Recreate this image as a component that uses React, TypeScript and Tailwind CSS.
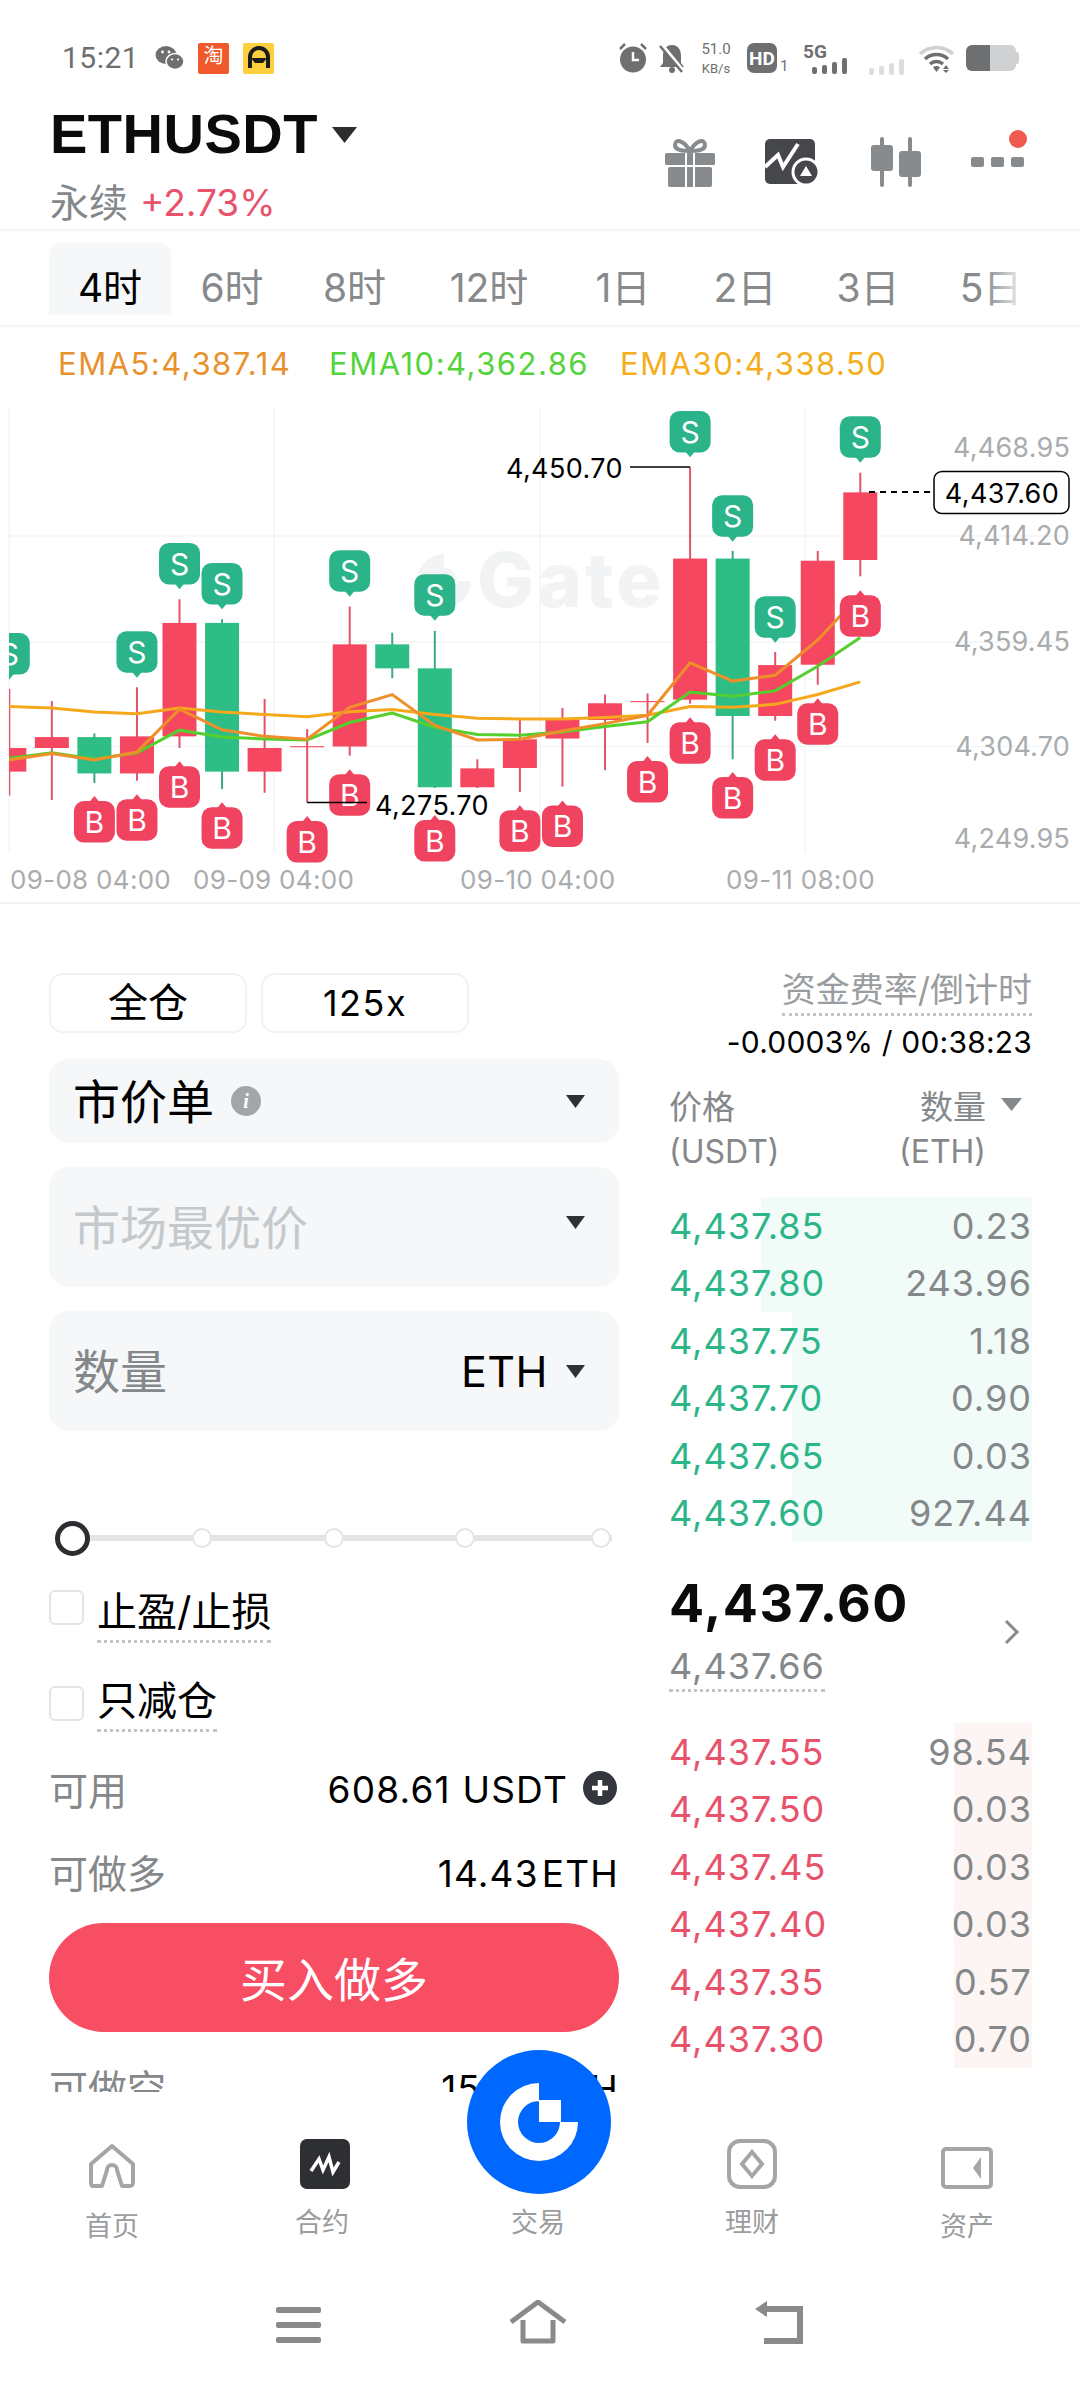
import React from "react";

const CJK = "font-['Inter','Noto_Sans_CJK_SC',sans-serif]";
const X = (i: number) => 9.3 + 42.55 * i;
const Y = (z: number) => 340 + z / 2.75 - 396;

const RED = "#f5475f";
const GREEN = "#2ebd85";
const WICKR = "#e4526a";
const WICKG = "#3aa884";

type C = [string, number, number, number, number];
const candles: C[] = [
  ["r", 1122, 1187, 960, 1253], ["r", 1092, 1122, 993, 1265], ["g", 1092, 1192, 1082, 1218],
  ["r", 1090, 1192, 955, 1212], ["r", 778, 1090, 713, 1122], ["g", 778, 1187, 768, 1235],
  ["r", 1122, 1187, 987, 1245], ["r", 1117, 1120, 1070, 1272], ["r", 837, 1118, 733, 1143],
  ["g", 837, 903, 805, 930], ["g", 903, 1230, 800, 1232], ["r", 1178, 1230, 1153, 1232],
  ["r", 1098, 1177, 1043, 1243], ["r", 1045, 1096, 1012, 1228], ["r", 999, 1045, 975, 1183],
  ["r", 993, 996, 972, 1108], ["r", 601, 989, 350, 1000], ["g", 601, 1034, 580, 1153],
  ["r", 894, 1034, 858, 1047], ["r", 607, 893, 580, 948], ["r", 419, 605, 365, 650],
];
const ema30 = [1008, 1012, 1023, 1028, 1012, 1023, 1030, 1036, 1022, 1016, 1030, 1040, 1042, 1042, 1038, 1032, 1008, 1010, 1002, 975, 940];
const ema10 = [1150, 1135, 1152, 1135, 1073, 1092, 1097, 1100, 1052, 1026, 1065, 1085, 1087, 1078, 1063, 1050, 968, 980, 965, 897, 818];
const ema5 = [1155, 1137, 1155, 1133, 1015, 1072, 1090, 1098, 1010, 975, 1060, 1100, 1098, 1075, 1055, 1032, 888, 938, 922, 825, 700];
const sells: [number, number][] = [[0, 806], [3, 801], [4, 558], [5, 613], [8, 578], [10, 644], [16, 195], [17, 427], [18, 705], [20, 210]];
const buys: [number, number][] = [[2, 1268], [3, 1263], [4, 1172], [5, 1285], [7, 1323], [8, 1194], [10, 1320], [12, 1293], [13, 1280], [15, 1158], [16, 1051], [17, 1202], [18, 1098], [19, 999], [20, 702]];
const poly = (a: number[]) => a.map((v, i) => `${X(i)},${Y(v)}`).join(" ");

function Chart() {
  const font = "Inter, sans-serif";
  const axis = [["4,468.95", 447], ["4,414.20", 535], ["4,359.45", 641], ["4,304.70", 746], ["4,249.95", 838]] as const;
  const times = [["09-08 04:00", 10], ["09-09 04:00", 193], ["09-10 04:00", 460], ["09-11 08:00", 726]] as const;
  return (
    <svg width="1080" height="509" viewBox="0 0 1080 509" className="block">
      <defs>
        <clipPath id="plot"><rect x="9" y="0" width="1071" height="509" /></clipPath>
      </defs>
      {[536, 642, 746.5].map((y) => <line key={y} x1="9" x2="1068" y1={y - 396} y2={y - 396} stroke="#f4f5f5" strokeWidth="1.5" />)}
      {[9, 274, 540, 805].map((x) => <line key={x} x1={x} x2={x} y1="11" y2="457" stroke="#f4f5f5" strokeWidth="1.5" />)}
      <line x1="0" x2="1080" y1="507" y2="507" stroke="#f3f4f4" strokeWidth="2" />
      <g fill="#f2f3f4">
        <path fillRule="evenodd" d="M444 158 A27 27 0 1 0 471 185 H444 Z M444 172 A13 13 0 1 1 431 185 H444 Z" />
        <text x="477" y="211" fontFamily={font} fontWeight="800" fontSize="76" letterSpacing="3">Gate</text>
      </g>
      <g clipPath="url(#plot)">
        {candles.map(([c, top, bottom, wt, wb], i) => (
          <g key={i}>
            <line x1={X(i)} x2={X(i)} y1={Y(wt)} y2={Y(wb)} stroke={c === "r" ? WICKR : WICKG} strokeWidth="2" />
            <rect x={X(i) - 17} width="34" y={Y(top)} height={Y(bottom) - Y(top)} fill={c === "r" ? RED : GREEN} />
          </g>
        ))}
        <polyline points={poly(ema30)} fill="none" stroke="#f5a81c" strokeWidth="3" />
        <polyline points={poly(ema10)} fill="none" stroke="#55cf2e" strokeWidth="3" />
        <polyline points={poly(ema5)} fill="none" stroke="#ee8f2a" strokeWidth="3" />
        <line x1="630" x2={X(16)} y1="71" y2="71" stroke="#000" strokeWidth="1.5" />
        {sells.map(([i, t]) => (
          <g key={`s${i}`}>
            <path d={`M${X(i) - 5} ${Y(t + 114) - 1} L${X(i)} ${Y(t + 114) + 5} L${X(i) + 5} ${Y(t + 114) - 1} Z`} fill="#2bb389" />
            <rect x={X(i) - 20.5} y={Y(t)} width="41" height="41.5" rx="10" fill="#2bb389" />
            <text x={X(i)} y={Y(t) + 21} textAnchor="middle" dominantBaseline="central" fill="#fff" fontFamily={font} fontSize="30">S</text>
          </g>
        ))}
        {buys.map(([i, t]) => (
          <g key={`b${i}`}>
            <path d={`M${X(i) - 5} ${Y(t) + 1} L${X(i)} ${Y(t) - 5} L${X(i) + 5} ${Y(t) + 1} Z`} fill="#ef4360" />
            <rect x={X(i) - 20.5} y={Y(t)} width="41" height="41.5" rx="10" fill="#ef4360" />
            <text x={X(i)} y={Y(t) + 21} textAnchor="middle" dominantBaseline="central" fill="#fff" fontFamily={font} fontSize="30">B</text>
          </g>
        ))}
        <line x1={X(7)} x2="367" y1="406.5" y2="406.5" stroke="#000" strokeWidth="1.5" />
      </g>
      {axis.map(([t, y]) => (
        <text key={t} x="1070" y={y - 396} textAnchor="end" dominantBaseline="central" fill="#a9acae" fontFamily={font} fontSize="27" letterSpacing="0.2">{t}</text>
      ))}
      {times.map(([t, x]) => (
        <text key={t} x={x} y="483" dominantBaseline="central" fill="#a9acae" fontFamily={font} fontSize="26" letterSpacing="0.3">{t}</text>
      ))}
      <text x="375" y="409" dominantBaseline="central" fill="#000" fontFamily={font} fontSize="27" letterSpacing="0.4">4,275.70</text>
      <text x="623" y="72" textAnchor="end" dominantBaseline="central" fill="#000" fontFamily={font} fontSize="27" letterSpacing="0.4">4,450.70</text>
      <line x1="869" x2="934" y1="96" y2="96" stroke="#000" strokeWidth="2" strokeDasharray="6 5" />
      <rect x="934" y="75.5" width="135" height="42" rx="8" fill="#fff" stroke="#000" strokeWidth="1.5" />
      <text x="1002" y="97" textAnchor="middle" dominantBaseline="central" fill="#000" fontFamily={font} fontSize="27" letterSpacing="0.4">4,437.60</text>
    </svg>
  );
}

function Tri({ className = "" }: { className?: string }) {
  return (
    <svg width="19" height="13" viewBox="0 0 19 13" className={className}>
      <path d="M0 0H19L9.5 13Z" fill="#2f3133" />
    </svg>
  );
}

function StatusBar() {
  return (
    <div className="h-[96px] flex items-start justify-between pl-[62px] pr-[60px] pt-[41px] text-[#6d6f71]">
      <div className="flex items-center h-[34px]">
        <span className="font-['Roboto',sans-serif] text-[30px] leading-none tracking-[0.5px] w-[93px]">15:21</span>
        <svg width="30" height="26" viewBox="0 0 30 26">
          <ellipse cx="11" cy="10" rx="10.5" ry="9" fill="#6d6f71" />
          <ellipse cx="20" cy="16.5" rx="9" ry="8" fill="#6d6f71" stroke="#fff" strokeWidth="1.5" />
          <circle cx="7.5" cy="7" r="1.4" fill="#fff" /><circle cx="14" cy="7" r="1.4" fill="#fff" />
          <circle cx="17" cy="14.5" r="1.1" fill="#fff" /><circle cx="23" cy="14.5" r="1.1" fill="#fff" />
        </svg>
        <div className="w-[31px] h-[31px] ml-[13px] bg-[#f0592b] flex items-start justify-center pt-[2px] font-['Noto_Sans_CJK_SC',sans-serif] text-white text-[20px] leading-none rounded-[2px]">淘</div>
        <div className="w-[31px] h-[31px] ml-[14px] bg-[#fbd03c] flex items-center justify-center rounded-[2px]">
          <svg width="22" height="24" viewBox="0 0 22 24">
            <path d="M2 22 L2 11 A9 9 0 0 1 20 11 L20 22" fill="none" stroke="#1c1c1c" strokeWidth="4" />
            <path d="M3 12 H19 L15 17 H7 Z" fill="#1c1c1c" />
          </svg>
        </div>
      </div>
      <div className="flex items-center h-[34px]">
        <svg width="28" height="30" viewBox="0 0 28 30">
          <circle cx="14" cy="16.5" r="13" fill="#6d6f71" />
          <path d="M1 6 L6 1 M27 6 L22 1" stroke="#6d6f71" strokeWidth="2.5" />
          <path d="M14 9V17H20" stroke="#fff" strokeWidth="2.5" fill="none" />
        </svg>
        <svg width="30" height="30" viewBox="0 0 30 30" className="ml-[10px]">
          <path d="M15 2 C8 2 6 8 6 13 V20 L3 24 H27 L24 20 V13 C24 8 22 2 15 2Z" fill="#6d6f71" />
          <circle cx="15" cy="27" r="3" fill="#6d6f71" />
          <path d="M4 1 L26 28" stroke="#fff" strokeWidth="4" /><path d="M3 3 L25 29" stroke="#6d6f71" strokeWidth="2.5" />
        </svg>
        <div className="ml-[13px] w-[32px] flex flex-col items-center font-['Roboto',sans-serif] leading-none">
          <span className="text-[15px] h-[20px]">51.0</span>
          <span className="text-[13px]">KB/s</span>
        </div>
        <div className="ml-[15px] w-[30px] h-[30px] rounded-[7px] bg-[#6d6f71] text-white text-[19px] font-bold font-['Roboto',sans-serif] flex items-center justify-center leading-none">HD</div>
        <span className="w-[10px] self-end mb-[1px] ml-[3px] text-[15px] font-['Roboto',sans-serif] leading-none">1</span>
        <div className="ml-[13px] w-[45px] h-[32px] relative">
          <span className="absolute left-0 top-0 text-[19px] font-bold font-['Roboto',sans-serif] leading-none">5G</span>
          <svg width="36" height="16" viewBox="0 0 36 16" className="absolute right-0 bottom-0">
            <rect x="0" y="9" width="5" height="7" rx="2" fill="#6d6f71" /><rect x="10" y="7" width="5" height="9" rx="2" fill="#6d6f71" />
            <rect x="20" y="4" width="5" height="12" rx="2" fill="#6d6f71" /><rect x="30" y="0" width="5" height="16" rx="2" fill="#6d6f71" />
          </svg>
        </div>
        <svg width="37" height="16" viewBox="0 0 37 16" className="ml-[21px] self-end">
          <rect x="0" y="9" width="5" height="7" rx="2" fill="#dcdddd" /><rect x="10" y="7" width="5" height="9" rx="2" fill="#dcdddd" />
          <rect x="20" y="4" width="5" height="12" rx="2" fill="#dcdddd" /><rect x="30" y="0" width="5" height="16" rx="2" fill="#dcdddd" />
        </svg>
        <svg width="37" height="30" viewBox="0 0 37 30" className="ml-[12px]">
          <path d="M2 11 A24 24 0 0 1 35 11" stroke="#cfd0d1" strokeWidth="3.5" fill="none" />
          <path d="M7 16 A17 17 0 0 1 30 16" stroke="#6d6f71" strokeWidth="3.5" fill="none" />
          <path d="M12 21 A10 10 0 0 1 25 21" stroke="#6d6f71" strokeWidth="3.5" fill="none" />
          <path d="M18.5 29 L15 24.5 A5 5 0 0 1 22 24.5 Z" fill="#6d6f71" />
          <path d="M28 22 L31 26 H25Z M25 27 H31 L28 30Z" fill="#6d6f71" />
        </svg>
        <div className="ml-[11px] w-[54px] h-[26px] flex items-center">
          <div className="w-[24px] h-[26px] bg-[#6d6f71] rounded-l-[6px]" />
          <div className="w-[26px] h-[26px] bg-[#d0d1d2] rounded-r-[6px]" />
          <div className="w-[3px] h-[12px] bg-[#d0d1d2] rounded-r-[2px]" />
        </div>
      </div>
    </div>
  );
}

function Header() {
  return (
    <div className="h-[135px] flex justify-between border-b-2 border-[#f4f5f5]">
      <div className="pl-[50px]">
        <div className="flex items-start h-[64px] pt-[15px]">
          <span className="font-['Liberation_Sans',sans-serif] font-bold text-[56px] leading-[46px] text-[#0b0b0b] tracking-[0.5px]">ETHUSDT</span>
          <svg width="25" height="16" viewBox="0 0 25 16" className="ml-[14px] mt-[16px]"><path d="M0 0H25L12.5 16Z" fill="#2a2c2e" /></svg>
        </div>
        <div className={`flex items-center h-[46px] mt-[19px] ${CJK}`}>
          <span className="text-[39px] leading-none text-[#85888a]">永续</span>
          <span className="ml-[12px] text-[37px] leading-none text-[#e8536b]">+2.73%</span>
        </div>
      </div>
      <div className="relative w-[416px] flex items-start">
        <svg width="50" height="50" viewBox="0 0 50 50" className="ml-[1px] mt-[41px]">
          <path d="M25 14 C18 2 10 2 10 8 C10 14 20 14 25 14 C30 14 40 14 40 8 C40 2 32 2 25 14Z" fill="none" stroke="#888b8d" strokeWidth="4" />
          <rect x="0" y="16" width="50" height="12" rx="1.5" fill="#888b8d" />
          <rect x="3" y="30" width="44" height="20" rx="2" fill="#888b8d" />
          <rect x="20" y="16" width="2" height="34" fill="#fff" /><rect x="28" y="16" width="2" height="34" fill="#fff" />
        </svg>
        <svg width="56" height="46" viewBox="0 0 56 46" className="ml-[50px] mt-[43px]">
          <rect x="0" y="0" width="50" height="45" rx="5" fill="#45474b" />
          <path d="M0 28 L13 16 L18 28 L33 5" fill="none" stroke="#fff" strokeWidth="4" />
          <circle cx="41" cy="33" r="13" fill="#45474b" stroke="#fff" strokeWidth="3" />
          <path d="M41 27 L47 37 H35Z" fill="#fff" />
        </svg>
        <svg width="52" height="50" viewBox="0 0 52 50" className="ml-[49px] mt-[41px]">
          <rect x="10" y="0" width="4" height="50" rx="2" fill="#888b8d" /><rect x="1" y="8" width="22" height="26" rx="3" fill="#888b8d" />
          <rect x="38" y="0" width="4" height="50" rx="2" fill="#888b8d" /><rect x="29" y="14" width="22" height="26" rx="3" fill="#888b8d" />
        </svg>
        <div className="ml-[49px] mt-[61px] flex gap-[7px]">
          <div className="w-[13px] h-[10px] rounded-[2px] bg-[#888b8d]" />
          <div className="w-[13px] h-[10px] rounded-[2px] bg-[#888b8d]" />
          <div className="w-[13px] h-[10px] rounded-[2px] bg-[#888b8d]" />
        </div>
        <div className="absolute left-[345px] top-[34px] w-[18px] h-[18px] rounded-full bg-[#f0594f]" />
      </div>
    </div>
  );
}

function Tabs() {
  const items: [string, string][] = [["6时", "w-[122px]"], ["8时", "w-[123px]"], ["12时", "w-[146px]"], ["1日", "w-[122px]"], ["2日", "w-[122px]"], ["3日", "w-[124px]"], ["5日", "w-[122px]"]];
  return (
    <div className={`relative h-[96px] pl-[49px] pt-[12px] flex items-start border-b-2 border-[#f4f5f5] overflow-hidden ${CJK}`}>
      <div className="w-[122px] h-[72px] rounded-t-[12px] bg-[#f5f7f8] flex items-center justify-center text-[39px] leading-none text-black pt-[16px]">4时</div>
      {items.map(([t, w]) => (
        <div key={t} className={`${w} h-[72px] flex items-center justify-center text-[39px] leading-none text-[#87898b] pt-[16px] shrink-0`}>{t}</div>
      ))}
      <div className="absolute left-[985px] top-0 bottom-0 w-[95px] bg-gradient-to-r from-white/0 via-white via-[45%] to-white" />
    </div>
  );
}

function EmaRow() {
  return (
    <div className="h-[69px] flex items-center pl-[58px] pt-[3px] font-['Inter',sans-serif] text-[31px] leading-none tracking-[1.5px]">
      <span className="w-[271px] text-[#e8912d]">EMA5:4,387.14</span>
      <span className="w-[291px] text-[#52d43a]">EMA10:4,362.86</span>
      <span className="text-[#f5ad1b]">EMA30:4,338.50</span>
    </div>
  );
}

function Dotted({ children, className = "" }: { children: React.ReactNode; className?: string }) {
  return <span className={`inline-block border-b-[3px] border-dotted border-[#c2c4c6] ${className}`}>{children}</span>;
}

function Left() {
  return (
    <div className={`w-[570px] ml-[49px] shrink-0 ${CJK}`}>
      <div className="flex items-start gap-[14px] text-black">
        <div className="w-[198px] h-[60px] rounded-[14px] border-2 border-[#f1f2f3] flex items-center justify-center text-[40px] leading-none">全仓</div>
        <div className="w-[208px] h-[60px] rounded-[14px] border-2 border-[#f1f2f3] flex items-center justify-center text-[36px] leading-none tracking-[1.5px]">125x</div>
      </div>
      <div className="mt-[26px] h-[84px] rounded-[20px] bg-[#f5f7f8] pl-[24px] pr-[34px] flex items-center justify-between">
        <div className="flex items-center">
          <span className="text-[47px] leading-none text-black">市价单</span>
          <span className="ml-[17px] w-[30px] h-[30px] rounded-full bg-[#a3a6a9] text-white text-[20px] italic font-bold leading-none flex items-center justify-center font-['Liberation_Serif',serif]">i</span>
        </div>
        <Tri />
      </div>
      <div className="mt-[24px] h-[120px] rounded-[20px] bg-[#f5f7f8] pl-[24px] pr-[34px] flex items-center justify-between">
        <span className="text-[47px] leading-none text-[#c6c9cb]">市场最优价</span>
        <Tri className="-mt-[10px]" />
      </div>
      <div className="mt-[24px] h-[120px] rounded-[20px] bg-[#f5f7f8] pl-[24px] pr-[34px] flex items-center justify-between">
        <span className="text-[47px] leading-none text-[#85888a]">数量</span>
        <div className="flex items-center">
          <span className="text-[43px] leading-none text-black mr-[18px] tracking-[0.5px]">ETH</span>
          <Tri />
        </div>
      </div>
      <div className="relative mt-[89px] h-[36px] flex items-center">
        <div className="absolute left-[11px] right-[7px] h-[6px] bg-[#e3e4e5]" />
        <div className="relative flex items-center">
          <div className="w-[35px] h-[35px] ml-[6px] rounded-full bg-white border-[5px] border-[#2b2d30]" />
          <div className="w-[20px] h-[20px] ml-[102px] rounded-full bg-white border-2 border-[#e3e4e5]" />
          <div className="w-[20px] h-[20px] ml-[112px] rounded-full bg-white border-2 border-[#e3e4e5]" />
          <div className="w-[20px] h-[20px] ml-[111px] rounded-full bg-white border-2 border-[#e3e4e5]" />
          <div className="w-[20px] h-[20px] ml-[116px] rounded-full bg-white border-2 border-[#e3e4e5]" />
        </div>
      </div>
      <div className="mt-[34px] h-[60px] flex items-start">
        <div className="w-[35px] h-[35px] rounded-[6px] border-2 border-[#e3e4e5]" />
        <Dotted className="ml-[13px] h-[53px] text-[40px] leading-[44px] text-black">止盈/止损</Dotted>
      </div>
      <div className="mt-[36px] h-[60px] flex items-start">
        <div className="w-[35px] h-[35px] rounded-[6px] border-2 border-[#e3e4e5]" />
        <Dotted className="ml-[13px] -mt-[7px] h-[53px] text-[40px] leading-[44px] text-black">只减仓</Dotted>
      </div>
      <div className="mt-[14px] h-[60px] flex items-center justify-between">
        <span className="text-[39px] leading-none text-[#85888a]">可用</span>
        <div className="flex items-center -mt-[1px]">
          <span className="text-[37px] leading-none text-black tracking-[1.2px]">608.61 USDT</span>
          <svg width="34" height="34" viewBox="0 0 34 34" className="ml-[15px] mr-[2px] -mt-[3px]">
            <circle cx="17" cy="17" r="17" fill="#33363a" />
            <path d="M17 9V25M9 17H25" stroke="#fff" strokeWidth="4.5" />
          </svg>
        </div>
      </div>
      <div className="mt-[23px] h-[60px] flex items-center justify-between">
        <span className="text-[39px] leading-none text-[#85888a]">可做多</span>
        <span className="text-[37px] leading-none text-black tracking-[1.2px]">14.43<span className="ml-[3px]">ETH</span></span>
      </div>
      <div className="mt-[20px] h-[109px] rounded-full bg-[#f74e63] flex items-center justify-center pt-[3px] text-white text-[47px] leading-none">买入做多</div>
      <div className="mt-[26px] h-[60px] flex items-center justify-between">
        <span className="text-[39px] leading-none text-[#85888a]">可做空</span>
        <span className="text-[37px] leading-none text-black tracking-[1.2px]">15.32<span className="ml-[3px]">ETH</span></span>
      </div>
    </div>
  );
}

function BookRow({ p, q, c, bg, w }: { p: string; q: string; c: string; bg: string; w: string }) {
  return (
    <div className="relative h-[57.5px] flex items-center justify-between text-[36px] leading-none tracking-[1px]">
      <div className={`absolute right-0 top-0 bottom-0 ${bg} ${w}`} />
      <span className={`relative ${c}`}>{p}</span>
      <span className="relative text-[#85888a]">{q}</span>
    </div>
  );
}

function Right() {
  const asks = [["4,437.85", "0.23", "w-[271px]"], ["4,437.80", "243.96", "w-[271px]"], ["4,437.75", "1.18", "w-[240px]"], ["4,437.70", "0.90", "w-[240px]"], ["4,437.65", "0.03", "w-[240px]"], ["4,437.60", "927.44", "w-[240px]"]];
  const bids = [["4,437.55", "98.54"], ["4,437.50", "0.03"], ["4,437.45", "0.03"], ["4,437.40", "0.03"], ["4,437.35", "0.57"], ["4,437.30", "0.70"]];
  return (
    <div className={`w-[363px] ml-[50px] shrink-0 ${CJK}`}>
      <div className="flex flex-col items-end h-[86px] -mt-[1px]">
        <Dotted className="text-[34px] leading-[36px] h-[44px] text-[#9a9d9f]">资金费率/倒计时</Dotted>
        <span className="mt-[11px] text-[30px] leading-none text-black tracking-[0.2px]">-0.0003% / 00:38:23</span>
      </div>
      <div className="h-[139px] pt-[31px] text-[#85888a]">
        <div className="flex justify-between items-center h-[36px]">
          <span className="text-[33px] leading-none">价格</span>
          <div className="flex items-center pr-[10px]">
            <span className="text-[33px] leading-none">数量</span>
            <svg width="21" height="13" viewBox="0 0 21 13" className="ml-[15px] -mt-[6px]"><path d="M0 0H21L10.5 13Z" fill="#85888a" /></svg>
          </div>
        </div>
        <div className="flex justify-between items-center h-[36px] mt-[9px] pr-[46px] text-[32px] leading-none">
          <span>(USDT)</span><span>(ETH)</span>
        </div>
      </div>
      {asks.map(([p, q, w]) => <BookRow key={p} p={p} q={q} w={w} c="text-[#2db58a]" bg="bg-[#f1fbf7]" />)}
      <div className="h-[181px] relative flex flex-col pt-[36px]">
        <span className="text-[52px] leading-none font-bold text-[#0b0b0b] tracking-[1.5px]">4,437.60</span>
        <span className="mt-[16px]"><Dotted className="text-[36px] leading-[41px] h-[46px] text-[#85888a] tracking-[1px]">4,437.66</Dotted></span>
        <svg width="17" height="26" viewBox="0 0 17 26" className="absolute right-[12px] top-[77px]"><path d="M3 2 L14 13 L3 24" fill="none" stroke="#85888a" strokeWidth="3" /></svg>
      </div>
      {bids.map(([p, q]) => <BookRow key={p} p={p} q={q} w="w-[78px]" c="text-[#e8536b]" bg="bg-[#fdf5f3]" />)}
    </div>
  );
}

function TabItem({ label, icon, mt, w }: { label: string; icon: React.ReactNode; mt: string; w: string }) {
  return (
    <div className={`flex flex-col items-center ${w}`}>
      <div className="h-[50px] flex items-end">{icon}</div>
      <span className={`${mt} text-[27px] leading-none text-[#9a9c9e] font-['Noto_Sans_CJK_SC',sans-serif]`}>{label}</span>
    </div>
  );
}

function TabBar() {
  return (
    <div className="relative h-[153px] pt-[47px] flex pl-[6px] bg-white">
      <TabItem label="首页" w="w-[212px]" mt="mt-[22px]" icon={
        <svg width="48" height="46" viewBox="0 0 48 46"><path d="M5 42 C3 42 3 40 3 38 V20 L24 2 L45 20 V38 C45 42 43 42 41 42 H34 L29 26 A5 5 0 0 0 19 26 L14 42 Z" fill="none" stroke="#a3a5a7" strokeWidth="4" strokeLinejoin="round" transform="translate(0 1)" /></svg>} />
      <TabItem label="合约" w="w-[208px]" mt="mt-[18px]" icon={
        <svg width="50" height="50" viewBox="0 0 50 50" className="ml-[6px]"><rect width="50" height="50" rx="7" fill="#2d2f33" /><path d="M11 32 L19 20 L23 31 L29 18 L33 33 L39 23" fill="none" stroke="#fff" strokeWidth="3.5" /></svg>} />
      <TabItem label="交易" w="w-[224px]" mt="mt-[18px]" icon={<div className="w-[50px]" />} />
      <TabItem label="理财" w="w-[204px]" mt="mt-[18px]" icon={
        <svg width="50" height="50" viewBox="0 0 50 50"><rect x="2" y="2" width="46" height="46" rx="11" fill="none" stroke="#a3a5a7" strokeWidth="4" /><path d="M25 13 L35 25 L25 37 L15 25Z" fill="none" stroke="#a3a5a7" strokeWidth="4" /></svg>} />
      <TabItem label="资产" w="w-[226px]" mt="mt-[22px]" icon={
        <svg width="52" height="42" viewBox="0 0 52 42"><rect x="2" y="2" width="48" height="38" rx="3" fill="none" stroke="#a3a5a7" strokeWidth="4" /><path d="M40 10 L32 21 L40 32Z" fill="#a3a5a7" /></svg>} />
    </div>
  );
}

function NavBar() {
  return (
    <div className="h-[143px] pt-[55px] flex items-start justify-center">
      <div className="w-[45px] h-[36px] mt-[7px] flex flex-col justify-between">
        <div className="h-[6px] rounded-[2px] bg-[#8a8a8a]" /><div className="h-[6px] rounded-[2px] bg-[#8a8a8a]" /><div className="h-[6px] rounded-[2px] bg-[#8a8a8a]" />
      </div>
      <svg width="58" height="44" viewBox="0 0 58 44" className="ml-[188px]">
        <path d="M2 22 L29 2 L56 22 M14 20 V41 H44 V20" fill="none" stroke="#8a8a8a" strokeWidth="5" strokeLinejoin="round" />
      </svg>
      <svg width="50" height="44" viewBox="0 0 50 44" className="ml-[187px]">
        <path d="M1 9 L13 1 V17 Z" fill="#8a8a8a" /><path d="M10 9 H46 V41 H10" fill="none" stroke="#8a8a8a" strokeWidth="6" />
      </svg>
    </div>
  );
}

export default function App() {
  return (
    <div className="relative w-[1080px] h-[2388px] bg-white overflow-hidden">
      <StatusBar />
      <Header />
      <Tabs />
      <EmaRow />
      <Chart />
      <div className="h-[1187px] pt-[68px] flex overflow-hidden">
        <Left />
        <Right />
      </div>
      <TabBar />
      <NavBar />
      <div className="absolute left-[467px] top-[2050px] w-[144px] h-[144px] rounded-full bg-[#0068ff] flex items-center justify-center">
        <svg width="80" height="80" viewBox="-40 -40 80 80">
          <path d="M0 -39 A39 39 0 1 0 39 0 H21 A21 21 0 1 1 0 -21 Z M0 -22 H22 V0 H0 Z" fill="#fff" />
        </svg>
      </div>
    </div>
  );
}
